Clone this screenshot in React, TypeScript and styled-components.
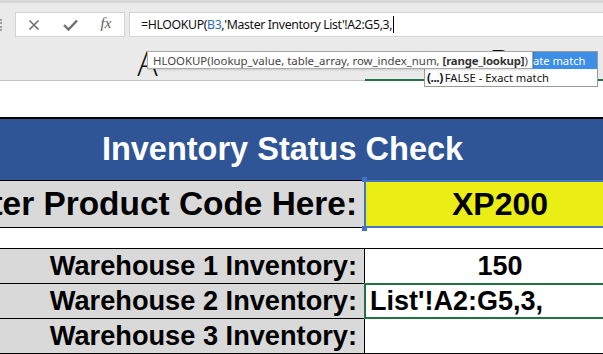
import styled, { createGlobalStyle } from 'styled-components';

const GlobalStyle = createGlobalStyle`
  html, body { margin: 0; padding: 0; background: #fff; overflow: hidden; }
  * { box-sizing: border-box; }
`;

const Window = styled.div`
  position: relative;
  width: 603px;
  height: 354px;
  overflow: hidden;
  display: flex;
  flex-direction: column;
  font-family: "Liberation Sans", Arial, sans-serif;
`;

const Chrome = styled.div`
  background: #eaeaea;
  border-top: 3px solid #d8d8d8;
  display: flex;
  flex-direction: column;
`;

const FormulaBar = styled.div`
  display: flex;
  align-items: stretch;
  height: 34px;
  padding-top: 9px;
`;

const Grip = styled.div`
  width: 2px;
  height: 12px;
  align-self: center;
  margin-right: 13px;
  border-left: 2px dotted #a0a0a0;
`;

const ButtonBox = styled.div`
  width: 110px;
  display: grid;
  grid-template-columns: repeat(3, 36px);
  align-items: center;
  justify-items: center;
  background: #fff;
  border: 1px solid #d4d4d4;
  color: #6e6e6e;
`;

const Fx = styled.span`
  font-family: "Liberation Serif", serif;
  font-style: italic;
  font-size: 15px;
  color: #5e5e5e;
  margin-top: -2px;
`;

const FormulaInput = styled.div`
  flex: 1;
  margin-left: 4px;
  margin-right: -10px;
  display: flex;
  align-items: center;
  padding-left: 11px;
  background: #fff;
  border: 1px solid #d4d4d4;
  font-family: "Noto Sans", "Open Sans", sans-serif;
  font-size: 12.3px;
  letter-spacing: -0.36px;
  color: #111;
  white-space: pre;
`;

const Ref = styled.span`
  color: #2e6cc0;
`;

const Caret = styled.span`
  display: inline-block;
  width: 1px;
  height: 17px;
  background: #000;
  margin-left: 1px;
`;

const HeaderStrip = styled.div`
  display: grid;
  grid-template-columns: 435px 270px;
  margin-left: -70px;
  height: 44px;
`;

const ColumnHeader = styled.div<{ $selected?: boolean }>`
  display: flex;
  justify-content: center;
  align-items: flex-end;
  font-family: "Open Sans", sans-serif;
  font-weight: 300;
  font-size: 34px;
  line-height: 34px;
  color: #111;
  border-bottom: ${p => (p.$selected ? '2px solid #217346' : '1px solid #c4c4c4')};
`;

const Sheet = styled.div`
  display: grid;
  grid-template-columns: 435px 270px;
  margin-left: -70px;
  padding-top: 36px;
  background: #fff;
`;

const TitleCell = styled.div`
  grid-column: 1 / -1;
  height: 64px;
  display: flex;
  justify-content: center;
  align-items: center;
  background: #2f5597;
  border-top: 2px solid #000;
  border-bottom: 1px solid #000;
  color: #fff;
  font-weight: bold;
  font-size: 32.5px;
`;

const BlankRow = styled.div`
  grid-column: 1 / -1;
  height: 21px;
  border-bottom: 1px solid #000;
`;

const LabelCell = styled.div<{ $height: number; $size: number }>`
  height: ${p => p.$height}px;
  display: flex;
  justify-content: flex-end;
  align-items: center;
  padding-right: 7px;
  background: #d9d9d9;
  border-right: 1px solid #000;
  border-bottom: 1px solid #000;
  font-weight: bold;
  font-size: ${p => p.$size}px;
  color: #000;
  white-space: nowrap;
`;

const ValueCell = styled.div<{ $height: number; $size: number; $fill?: string; $left?: boolean; $mark?: 'ref' | 'active' }>`
  position: relative;
  height: ${p => p.$height}px;
  display: flex;
  justify-content: ${p => (p.$left ? 'flex-start' : 'center')};
  align-items: center;
  padding-left: ${p => (p.$left ? '5px' : '0')};
  background: ${p => p.$fill || '#fff'};
  border-bottom: 1px solid #000;
  font-weight: bold;
  font-size: ${p => p.$size}px;
  color: #000;
  white-space: nowrap;

  &::before {
    content: '';
    display: ${p => (p.$mark ? 'block' : 'none')};
    position: absolute;
    left: -1px;
    top: -1px;
    right: 0;
    bottom: -1px;
    border: 2px solid ${p => (p.$mark === 'ref' ? '#4472c4' : '#217346')};
    border-right: none;
  }
`;

const Handle = styled.span<{ $bottom?: boolean }>`
  position: absolute;
  left: -3px;
  ${p => (p.$bottom ? 'bottom: -4px;' : 'top: -4px;')}
  width: 5px;
  height: 5px;
  background: #4472c4;
`;

const Tooltip = styled.div`
  position: absolute;
  left: 147px;
  top: 51px;
  width: 386px;
  height: 18px;
  z-index: 2;
  display: flex;
  align-items: center;
  padding-left: 5px;
  background: #fff;
  border: 1px solid #a8a8a8;
  box-shadow: 1px 1px 2px rgba(0, 0, 0, 0.15);
  font-family: "Noto Sans", "Open Sans", sans-serif;
  font-size: 11.4px;
  color: #444;
  white-space: pre;
  overflow: hidden;

  b { color: #333; letter-spacing: -0.2px; }
`;

const Dropdown = styled.div`
  position: absolute;
  left: 424px;
  top: 51px;
  width: 174px;
  height: 36px;
  z-index: 1;
  background: #fff;
  border: 1px solid #9a9a9a;
  display: flex;
  flex-direction: column;
  font-family: "Noto Sans", "Open Sans", sans-serif;
  font-size: 11.2px;
`;

const Option = styled.div<{ $active?: boolean }>`
  height: 17px;
  display: flex;
  align-items: center;
  gap: 2px;
  padding-left: 2px;
  background: ${p => (p.$active ? '#3d8ee6' : '#fff')};
  color: ${p => (p.$active ? '#fff' : '#111')};
  white-space: nowrap;
`;

const OptionIcon = styled.span`
  font-weight: bold;
  font-size: 12px;
  letter-spacing: -0.5px;
`;

export default function App() {
  return (
    <Window>
      <GlobalStyle />
      <Chrome>
        <FormulaBar>
          <Grip />
          <ButtonBox>
            <svg width="12" height="12" viewBox="0 0 12 12">
              <path d="M1.5 1.5 L10.5 10.5 M10.5 1.5 L1.5 10.5" stroke="#6e6e6e" strokeWidth="1.6" fill="none" />
            </svg>
            <svg width="15" height="12" viewBox="0 0 15 12">
              <path d="M1 6 L5.5 10.5 L14 1.5" stroke="#6e6e6e" strokeWidth="2.4" fill="none" />
            </svg>
            <Fx>fx</Fx>
          </ButtonBox>
          <FormulaInput>
            =HLOOKUP(<Ref>B3</Ref>,'Master Inventory List'!A2:G5,3,<Caret />
          </FormulaInput>
        </FormulaBar>
        <HeaderStrip>
          <ColumnHeader>A</ColumnHeader>
          <ColumnHeader $selected>B</ColumnHeader>
        </HeaderStrip>
      </Chrome>

      <Sheet>
        <TitleCell>Inventory Status Check</TitleCell>
        <LabelCell $height={47} $size={33.4}>Enter Product Code Here:</LabelCell>
        <ValueCell $height={47} $size={32} $fill="#ebee14" $mark="ref">
          <Handle />
          <Handle $bottom />
          XP200
        </ValueCell>
        <BlankRow />
        <LabelCell $height={35} $size={27.2}>Warehouse 1 Inventory:</LabelCell>
        <ValueCell $height={35} $size={27}>150</ValueCell>
        <LabelCell $height={35} $size={27.2}>Warehouse 2 Inventory:</LabelCell>
        <ValueCell $height={35} $size={27} $left $mark="active">List'!A2:G5,3,</ValueCell>
        <LabelCell $height={35} $size={27.2}>Warehouse 3 Inventory:</LabelCell>
        <ValueCell $height={35} $size={27} />
      </Sheet>

      <Dropdown>
        <Option $active><OptionIcon>(...)</OptionIcon>TRUE - Approximate match</Option>
        <Option><OptionIcon>(...)</OptionIcon>FALSE - Exact match</Option>
      </Dropdown>
      <Tooltip>
        HLOOKUP(lookup_value, table_array, row_index_num, <b>[range_lookup]</b>)
      </Tooltip>
    </Window>
  );
}
